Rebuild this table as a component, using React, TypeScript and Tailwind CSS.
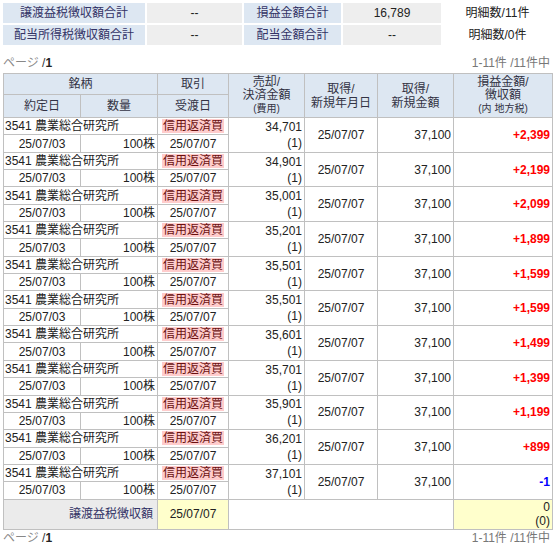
import React from "react"

const FONT = { fontFamily: '"Liberation Sans", "Noto Sans CJK JP", sans-serif' }

const ROWS = [
  { sell: "34,701", pl: "+2,399" },
  { sell: "34,901", pl: "+2,199" },
  { sell: "35,001", pl: "+2,099" },
  { sell: "35,201", pl: "+1,899" },
  { sell: "35,501", pl: "+1,599" },
  { sell: "35,501", pl: "+1,599" },
  { sell: "35,601", pl: "+1,499" },
  { sell: "35,701", pl: "+1,399" },
  { sell: "35,901", pl: "+1,199" },
  { sell: "36,201", pl: "+899" },
  { sell: "37,101", pl: "-1" },
]

const cell = "border border-[#c0c0c0] px-[2px] p-0 leading-none"
const head = "border border-[#c0c0c0] bg-[#dde7f2] text-[#333344] font-normal p-0 text-center"

function PageLine() {
  return (
    <div className="flex justify-between h-[14px] leading-[14px] px-[3px] text-[12px]">
      <span className="text-[#888]">
        ページ <span className="text-[#333]">/</span><b className="text-[#222]">1</b>
      </span>
      <span className="text-[#777] pr-[2px]">1-11件 /11件中</span>
    </div>
  )
}

export default function App() {
  return (
    <div className="w-[555px] h-[544px] overflow-hidden bg-white text-[12px] text-[#222]" style={FONT}>
      {/* summary */}
      <div className="pt-[3px] px-[3px]">
        <div className="grid grid-cols-[142px_95px_97px_98px_1fr] gap-[2px] text-[12px]">
          <div className="h-[20px] flex items-center justify-center bg-[#dde7f2] text-[#333366]">譲渡益税徴収額合計</div>
          <div className="h-[20px] flex items-center justify-center bg-[#eeeeee]">--</div>
          <div className="h-[20px] flex items-center justify-center bg-[#dde7f2] text-[#333366]">損益金額合計</div>
          <div className="h-[20px] flex items-center justify-center bg-[#eeeeee]">16,789</div>
          <div className="h-[20px] flex items-center justify-center">明細数/11件</div>
          <div className="h-[20px] flex items-center justify-center bg-[#dde7f2] text-[#333366]">配当所得税徴収額合計</div>
          <div className="h-[20px] flex items-center justify-center bg-[#eeeeee]">--</div>
          <div className="h-[20px] flex items-center justify-center bg-[#dde7f2] text-[#333366]">配当金額合計</div>
          <div className="h-[20px] flex items-center justify-center bg-[#eeeeee]">--</div>
          <div className="h-[20px] flex items-center justify-center">明細数/0件</div>
        </div>
      </div>

      <div className="mt-[11px]">
        <PageLine />
      </div>

      <div className="px-[3px] mt-[3px]">
        <table className="table-fixed border-collapse w-[549px]">
          <colgroup>
            <col className="w-[77px]" />
            <col className="w-[77px]" />
            <col className="w-[71px]" />
            <col className="w-[76px]" />
            <col className="w-[73px]" />
            <col className="w-[76px]" />
            <col className="w-[99px]" />
          </colgroup>
          <thead>
            <tr className="h-[21px]">
              <th colSpan={2} className={head}>銘柄</th>
              <th className={head}>取引</th>
              <th rowSpan={2} className={head}>
                <div className="leading-[13px]">売却/<br />決済金額<br /><span className="text-[10px]">(費用)</span></div>
              </th>
              <th rowSpan={2} className={head}>
                <div className="leading-[14px]">取得/<br />新規年月日</div>
              </th>
              <th rowSpan={2} className={head}>
                <div className="leading-[14px]">取得/<br />新規金額</div>
              </th>
              <th rowSpan={2} className={head}>
                <div className="leading-[13px]">損益金額/<br />徴収額<br /><span className="text-[10px]">(内 地方税)</span></div>
              </th>
            </tr>
            <tr className="h-[23px]">
              <th className={head}>約定日</th>
              <th className={head}>数量</th>
              <th className={head}>受渡日</th>
            </tr>
          </thead>
          <tbody>
            {ROWS.map((r, i) => (
              <React.Fragment key={i}>
                <tr className="h-[17.35px]">
                  <td colSpan={2} className={cell + " text-left !pl-[1px] whitespace-nowrap"}>3541 農業総合研究所</td>
                  <td className={cell + " text-center"}>
                    <span className="bg-[#ffcccc] text-[#6a1010] px-[1px]">信用返済買</span>
                  </td>
                  <td rowSpan={2} className={cell + " text-right align-middle"}>
                    <div className="leading-[16px]">{r.sell}</div>
                    <div className="leading-[16px]">(1)</div>
                  </td>
                  <td rowSpan={2} className={cell + " text-center"}>25/07/07</td>
                  <td rowSpan={2} className={cell + " text-right"}>37,100</td>
                  <td
                    rowSpan={2}
                    className={
                      cell + " text-right font-bold " + (r.pl.startsWith("-") ? "text-[#0000ff]" : "text-[#ff0000]")
                    }
                  >
                    {r.pl}
                  </td>
                </tr>
                <tr className="h-[17.35px]">
                  <td className={cell + " text-center"}>25/07/03</td>
                  <td className={cell + " text-right"}>100株</td>
                  <td className={cell + " text-center"}>25/07/07</td>
                </tr>
              </React.Fragment>
            ))}
            <tr className="h-[30px]">
              <td colSpan={2} className={cell + " bg-[#ebebeb] text-right text-[#333366] !pr-[4px]"}>譲渡益税徴収額</td>
              <td className={cell + " bg-[#ffffcc] text-center"}>25/07/07</td>
              <td colSpan={3} className={cell}></td>
              <td className={cell + " bg-[#ffffcc] text-right"}>
                <div className="leading-[14px]">0</div>
                <div className="leading-[14px]">(0)</div>
              </td>
            </tr>
          </tbody>
        </table>
      </div>

      <div className="mt-[1px]">
        <PageLine />
      </div>
    </div>
  )
}
